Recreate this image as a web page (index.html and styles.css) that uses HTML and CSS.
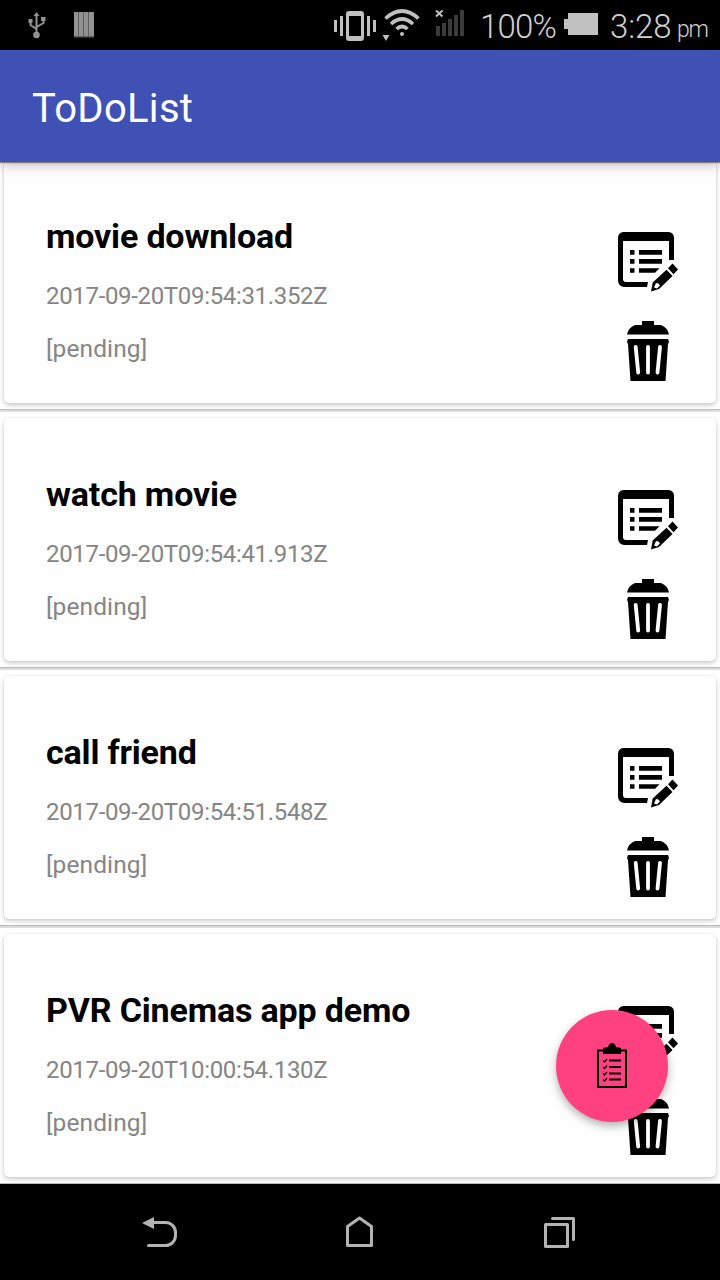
FILE: index.html
```html
<!DOCTYPE html>
<html lang="en">
<head>
<meta charset="utf-8">
<title>ToDoList</title>
<link rel="stylesheet" href="styles.css">
</head>
<body>
<svg class="symbols" aria-hidden="true">
  <symbol id="edit" viewBox="0 0 60 60">
    <path fill-rule="evenodd" d="M5 0H51Q56 1 56 6V28H51V9H5V47Q5 50 8 50H30L29 55H6Q0 54 0 48V6Q0 1 5 0Z"/>
    <path d="M12 18h4.500v4.700H12zM12 27h4.500v4.700H12zM12 36.300h4.500v4.500H12zM21 18h23v4.700H21zM21 27h23v4.700H21zM21 36.300h20.500l-4.500 4.500H21z"/>
    <path d="M54.500 31.500L60 37.500L55.500 42.300L50 36.300Z"/>
    <path fill-rule="evenodd" d="M48.500 37.700L54.500 44L41 57L33 59.500L34.700 50.500ZM38 51L36 55.500L39 56.500L42 53.500L40.500 51.500Z"/>
  </symbol>
  <symbol id="trash" viewBox="0 0 42 60">
    <path d="M0 13.500Q1 7 8 4H15V0H27V4H34Q41 7 42 13.500Z"/>
    <path d="M1 18H41L42 21L41 23L38.500 60H3.500L1 23L0 21Z"/>
    <path class="slots" d="M8.700 26L11.200 51.500M21 26V51.500M33 26L30.500 51.500"/>
  </symbol>
</svg>

<header class="status-bar">
  <svg class="usb" viewBox="28 12 18 27"><path d="M36.500 15v19M30.500 21v4l6 4M43.500 19v4l-7 4"/><path class="solid" d="M33.500 16l3-4 3 4zM28.500 19h4v4h-4zM41 17h4.500v4H41z"/><circle class="solid" cx="36.500" cy="35" r="3.300"/></svg>
  <svg class="barcode" viewBox="74 12 20 26"><path class="dim" d="M74 12h20v25.500H74z"/><path class="solid" d="M74 12h4v24h-4zM79 12h4v24h-4zM84 12h4v24h-4zM89 12h5v24h-5z"/></svg>
  <svg class="vibrate" viewBox="334 10 42 32"><path d="M335.500 20v12M341.500 16v20M368.500 16v20M374.500 20v12"/><path class="solid" fill-rule="evenodd" d="M349 11h12q3 0 3 3v24q0 3-3 3h-12q-3 0-3-3V14q0-3 3-3ZM349 16v20h12V16Z"/></svg>
  <svg class="wifi" viewBox="382 8 38 34"><path d="M385.500 18.500Q402 3.500 418.500 18.500M391 24Q402 14 413 24M396.500 29Q402 24 407.500 29"/><circle class="solid" cx="402" cy="34" r="2"/><path class="solid" d="M382.500 35h7l-3.500 6z"/></svg>
  <svg class="signal" viewBox="435 8 30 30"><path class="bars" d="M436 26h4v10h-4zM442 23h4v13h-4zM448 19h4v17h-4zM454 15h4v21h-4zM460 10h4v26h-4z"/><path d="M436 10.500l6.500 6M442.500 10.500l-6.500 6"/></svg>
  <span class="percent">100%</span>
  <svg class="battery" viewBox="564 13 34 22"><path d="M568 13h30v22h-30v-6h-4V19h4z"/></svg>
  <span class="time">3:28</span><span class="meridiem">pm</span>
</header>

<div class="app-bar"><h1>ToDoList</h1></div>

<main class="list">
  <article class="row"><div class="card">
    <div class="details"><h2>movie download</h2><p class="date">2017-09-20T09:54:31.352Z</p><p class="state">[pending]</p></div>
    <div class="actions"><svg class="edit"><use href="#edit"/></svg><svg class="trash"><use href="#trash"/></svg></div>
  </div></article>
  <article class="row"><div class="card">
    <div class="details"><h2>watch movie</h2><p class="date">2017-09-20T09:54:41.913Z</p><p class="state">[pending]</p></div>
    <div class="actions"><svg class="edit"><use href="#edit"/></svg><svg class="trash"><use href="#trash"/></svg></div>
  </div></article>
  <article class="row"><div class="card">
    <div class="details"><h2>call friend</h2><p class="date">2017-09-20T09:54:51.548Z</p><p class="state">[pending]</p></div>
    <div class="actions"><svg class="edit"><use href="#edit"/></svg><svg class="trash"><use href="#trash"/></svg></div>
  </div></article>
  <article class="row"><div class="card">
    <div class="details"><h2>PVR Cinemas app demo</h2><p class="date">2017-09-20T10:00:54.130Z</p><p class="state">[pending]</p></div>
    <div class="actions"><svg class="edit"><use href="#edit"/></svg><svg class="trash"><use href="#trash"/></svg></div>
  </div></article>
  <button class="fab" aria-label="Add task">
    <svg viewBox="0 0 30 46"><path class="board" d="M1 7.500h28v36.500H1z"/><path d="M6 11V5l5-1q1-4 4-4t4 4l5 1v6z"/><path class="lines" d="M12 17.500h12M12 24h12M12 30.500h12M12 36.500h12"/><path class="ticks" d="M6 17.500l1.500 1.500 2.500-3M6 24l1.500 1.500 2.500-3M6 30.500l1.500 1.500 2.500-3M6 36.500l1.500 1.500 2.500-3"/></svg>
  </button>
</main>

<nav class="nav-bar">
  <svg class="back" viewBox="142 1216 36 32"><path d="M153 1222.500h12.500a10 10 0 0 1 10 10v3a10 10 0 0 1-10 10h-17"/><path class="arrow" d="M142 1223l12-6v12z"/></svg>
  <svg class="home" viewBox="345 1216 28 32"><path d="M347.500 1226.500l12-8.500 12 8.500v19h-24z"/></svg>
  <svg class="recents" viewBox="543 1215 34 34"><path d="M545.500 1224.500h22v22h-22zM552.500 1218.500h21v21"/></svg>
</nav>
</body>
</html>
```

FILE: styles.css
```css
* { box-sizing: border-box; }
body { margin: 0; width: 720px; height: 1280px; display: flex; flex-direction: column; overflow: hidden; background: #fff; font-family: Roboto, sans-serif; }
h1, h2, p { margin: 0; white-space: nowrap; }
svg { display: block; flex: none; }
.symbols { position: absolute; width: 0; height: 0; }

.status-bar { height: 50px; flex: none; display: flex; align-items: flex-start; background: #000; color: #d0d0d0; font-weight: 300; white-space: nowrap; }
.status-bar svg { fill: none; stroke: #c0c0c0; stroke-width: 3; }
.status-bar .solid { fill: #c0c0c0; stroke: none; }
.status-bar .usb { width: 18px; height: 27px; margin: 12px 0 0 28px; stroke: #929292; stroke-width: 2; }
.status-bar .usb .solid, .status-bar .barcode .solid { fill: #929292; }
.barcode { width: 20px; height: 26px; margin: 12px 0 0 28px; }
.status-bar .dim { fill: #5c5c5c; stroke: none; }
.vibrate { width: 42px; height: 32px; margin: 10px 0 0 240px; }
.status-bar .wifi { width: 38px; height: 34px; margin: 8px 0 0 6px; stroke-width: 3.6; }
.status-bar .signal { width: 30px; height: 30px; margin: 8px 0 0 15px; stroke-width: 2; }
.signal .bars { fill: #3b3b3b; stroke: none; }
.status-bar .battery { width: 34px; height: 22px; margin: 13px 0 0 8px; fill: #c0c0c0; stroke: none; }
.percent { width: 76px; margin-left: 15px; font-size: 33px; line-height: 54px; letter-spacing: -.8px; }
.time { width: 67px; margin-left: 12px; font-size: 33px; line-height: 54px; letter-spacing: -.1px; }
.meridiem { font-size: 23px; line-height: 59px; letter-spacing: -1.3px; }

.app-bar { height: 112px; flex: none; padding: 0 32px; background: #3f51b5; color: #fff; box-shadow: 0 1px 1px rgba(0,0,0,.4), 0 2px 12px rgba(0,0,0,.3); z-index: 1; }
h1 { font-size: 40px; font-weight: 400; line-height: 117px; letter-spacing: .3px; }

.list { height: 1022px; flex: none; overflow: hidden; position: relative; background: #fff; }
.row { height: 258px; padding: 7px 4px; border-bottom: 1px solid #dadada; box-shadow: inset 0 -1px #bcbcbc, 0 1px #dedede; }
.row:first-child { margin-top: -9px; }
.card { height: 243px; padding: 0 38px 0 42px; display: flex; justify-content: space-between; background: #fefefe; border-radius: 5px; box-shadow: 0 2px 5px rgba(0,0,0,.22), 0 0 2px rgba(0,0,0,.06); }
.details { padding-top: 55px; }
h2 { font-size: 34px; line-height: 42px; font-weight: 700; letter-spacing: -.17px; color: #000; }
.date, .state { font-size: 24px; line-height: 30px; color: #858585; }
.date { margin-top: 24px; letter-spacing: -.33px; }
.state { margin-top: 23px; font-size: 24.5px; letter-spacing: .1px; }
.actions { width: 60px; padding-top: 72px; display: flex; flex-direction: column; gap: 29px; }
.edit { width: 60px; height: 60px; }
.trash { width: 42px; height: 60px; margin-left: 9px; }
.slots { fill: none; stroke: #fefefe; stroke-width: 3.8; stroke-linecap: round; }

.fab { position: absolute; right: 52px; bottom: 62px; width: 112px; height: 112px; padding: 0; border: 0; border-radius: 50%; display: flex; align-items: center; justify-content: center; background: #ff4081; box-shadow: 0 4px 9px rgba(0,0,0,.3); }
.fab svg { width: 30px; height: 46px; }
.fab .board { fill: none; stroke: #000; stroke-width: 2; }
.fab .lines { fill: none; stroke: #000; stroke-width: 2; }
.fab .ticks { fill: none; stroke: #000; stroke-width: 1.3; }

.nav-bar { height: 96px; flex: none; display: flex; background: #000; }
.nav-bar svg { fill: none; stroke: #b3b3b3; stroke-width: 3; stroke-linejoin: round; stroke-linecap: round; }
.back { width: 36px; height: 32px; margin: 32px 0 0 142px; }
.nav-bar .arrow { fill: #b3b3b3; stroke: none; }
.home { width: 28px; height: 32px; margin: 32px 0 0 167px; }
.recents { width: 34px; height: 34px; margin: 31px 0 0 170px; }
```
